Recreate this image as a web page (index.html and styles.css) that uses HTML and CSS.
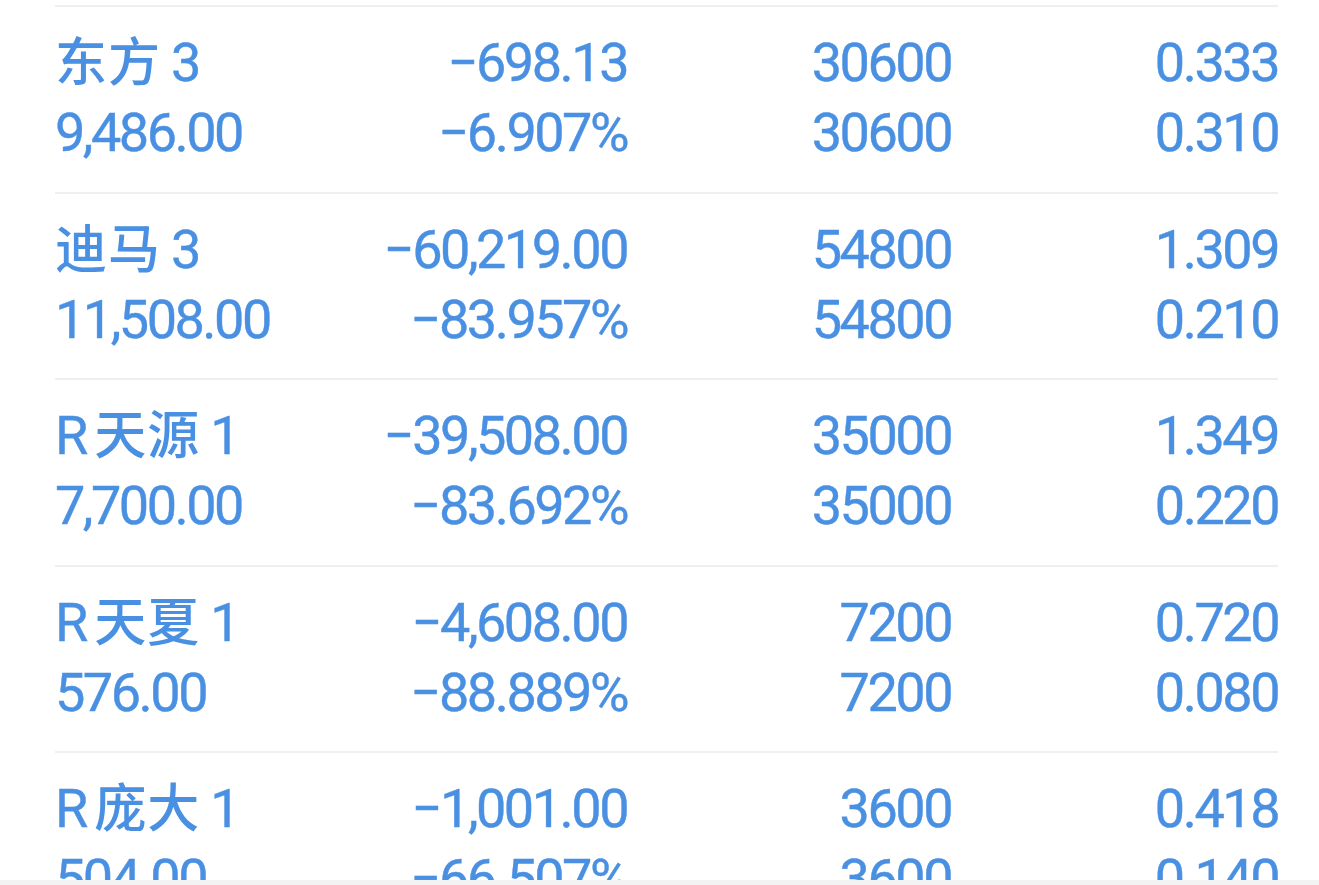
FILE: index.html
```html
<!DOCTYPE html>
<html lang="zh">
<head>
<meta charset="utf-8">
<link rel="stylesheet" href="styles.css">
</head>
<body>
<div class="page">
  <div class="list">
    <div class="row">
      <div class="cell name"><span class="cjk">东方</span>3</div><div class="cell num">−698.13</div><div class="cell num">30600</div><div class="cell num">0.333</div>
      <div class="cell">9,486.00</div><div class="cell num">−6.907%</div><div class="cell num">30600</div><div class="cell num">0.310</div>
    </div>
    <div class="row">
      <div class="cell name"><span class="cjk">迪马</span>3</div><div class="cell num">−60,219.00</div><div class="cell num">54800</div><div class="cell num">1.309</div>
      <div class="cell">11,508.00</div><div class="cell num">−83.957%</div><div class="cell num">54800</div><div class="cell num">0.210</div>
    </div>
    <div class="row">
      <div class="cell name">R<span class="cjk mid">天源</span>1</div><div class="cell num">−39,508.00</div><div class="cell num">35000</div><div class="cell num">1.349</div>
      <div class="cell">7,700.00</div><div class="cell num">−83.692%</div><div class="cell num">35000</div><div class="cell num">0.220</div>
    </div>
    <div class="row">
      <div class="cell name">R<span class="cjk mid">天夏</span>1</div><div class="cell num">−4,608.00</div><div class="cell num">7200</div><div class="cell num">0.720</div>
      <div class="cell">576.00</div><div class="cell num">−88.889%</div><div class="cell num">7200</div><div class="cell num">0.080</div>
    </div>
    <div class="row">
      <div class="cell name">R<span class="cjk mid">庞大</span>1</div><div class="cell num">−1,001.00</div><div class="cell num">3600</div><div class="cell num">0.418</div>
      <div class="cell">504.00</div><div class="cell num">−66.507%</div><div class="cell num">3600</div><div class="cell num">0.140</div>
    </div>
  </div>
  <div class="footer"></div>
</div>
</body>
</html>
```
FILE: styles.css
```css
html, body {
  margin: 0;
  padding: 0;
  background: #ffffff;
  overflow: hidden;
}
.page {
  width: 1319px;
  height: 885px;
  display: flex;
  flex-direction: column;
}
.list {
  height: 880px;
  overflow: hidden;
  padding: 5px 41px 0 55px;
  box-sizing: border-box;
}
.row {
  border-top: 2px solid #efefef;
  height: 186.5px;
  box-sizing: border-box;
  padding-top: 21px;
  display: grid;
  grid-template-columns: 285px 287px 324px 1fr;
  grid-auto-rows: 70px;
  font-family: Roboto, "Noto Sans CJK SC", sans-serif;
  font-weight: 400;
  font-size: 54px;
  line-height: 70px;
  letter-spacing: -2.5px;
  color: #4a90e2;
  -webkit-text-stroke: 0.4px #4a90e2;
}
.cell {
  white-space: nowrap;
}
.num {
  text-align: right;
}
.name {
  letter-spacing: 0;
}
.cjk {
  font-family: "Noto Sans CJK SC", sans-serif;
  font-weight: 500;
  font-size: 52px;
  line-height: 46px;
  letter-spacing: 1px;
  margin-right: 10px;
  -webkit-text-stroke: 0;
}
.cjk.mid {
  margin-left: 6px;
}
.footer {
  height: 5px;
  background: #f3f3f3;
}
```
